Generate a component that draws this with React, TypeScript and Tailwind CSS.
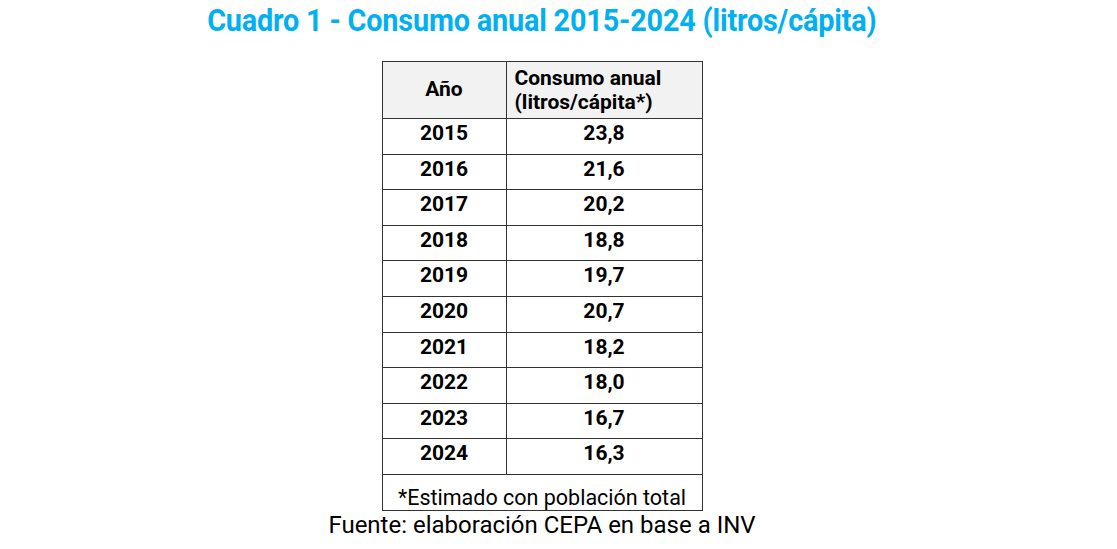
import React from "react";

const rows: [string, string][] = [
  ["2015", "23,8"],
  ["2016", "21,6"],
  ["2017", "20,2"],
  ["2018", "18,8"],
  ["2019", "19,7"],
  ["2020", "20,7"],
  ["2021", "18,2"],
  ["2022", "18,0"],
  ["2023", "16,7"],
  ["2024", "16,3"],
];

export default function App() {
  return (
    <div className="w-[1084px] h-[549px] bg-white flex flex-col items-center font-['Roboto',sans-serif] text-black">
      <h1 className="mt-[3px] h-[36px] flex items-center justify-center">
        <span className="inline-block origin-center scale-x-[0.93] whitespace-nowrap text-[31px] font-bold text-[#00b0f0] tracking-[-0.2px]">
          Cuadro 1 - Consumo anual 2015-2024 (litros/cápita)
        </span>
      </h1>
      <table className="mt-[22px] border-collapse w-[321px] text-[21px]">
        <thead>
          <tr className="bg-[#f2f2f2] h-[57px]">
            <th className="w-[124px] border border-[#333] font-bold text-center">Año</th>
            <th className="border border-[#333] font-bold text-left pl-[8px] leading-[24px]">
              Consumo anual
              <br />
              (litros/cápita*)
            </th>
          </tr>
        </thead>
        <tbody>
          {rows.map(([year, value]) => (
            <tr key={year} className="h-[35.6px]">
              <td className="border border-[#333] font-bold text-center align-top leading-none pt-[4px]">{year}</td>
              <td className="border border-[#333] font-bold text-center align-top leading-none pt-[4px]">{value}</td>
            </tr>
          ))}
          <tr className="h-[36px]">
            <td colSpan={2} className="border border-[#333] text-center align-bottom text-[21.5px] leading-[22px] pb-[1px]">
              *Estimado con población total
            </td>
          </tr>
        </tbody>
      </table>
      <p className="text-[24px] leading-[28px] mt-[0px]">Fuente: elaboración CEPA en base a INV</p>
    </div>
  );
}
